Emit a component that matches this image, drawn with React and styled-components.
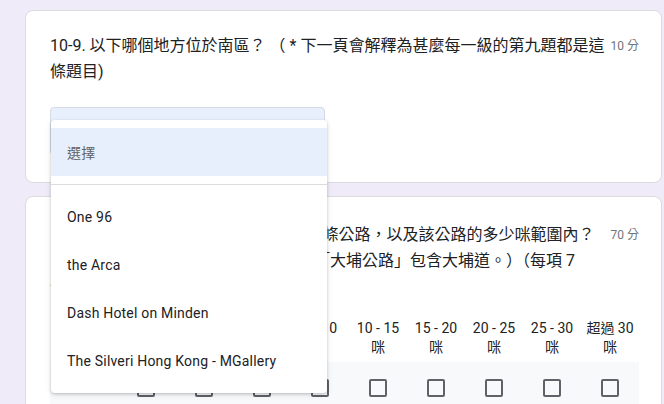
import React from 'react'
import styled, { createGlobalStyle } from 'styled-components'

const GlobalStyle = createGlobalStyle`
  html, body {
    margin: 0;
    padding: 0;
    background: #f0ebf8;
    overflow: hidden;
  }
  body {
    font-family: Roboto, "Noto Sans CJK TC", "Noto Sans", sans-serif;
    color: #202124;
  }
`

const Page = styled.div`
  width: 664px;
  height: 404px;
  padding: 10px 0 0 25px;
  box-sizing: border-box;
  overflow: hidden;
`

const Card = styled.div`
  width: 637px;
  box-sizing: border-box;
  background: #fff;
  border: 1px solid #dadce0;
  border-radius: 8px;
  padding: ${p => p.$top || 22}px 22px ${p => p.$bottom || 24}px 24px;
  margin-bottom: 13px;
`

const TitleRow = styled.div`
  display: flex;
  align-items: flex-start;
`

const Title = styled.div`
  flex: 1;
  font-size: 16px;
  line-height: 26px;
`

const Points = styled.div`
  flex: none;
  margin-left: 4px;
  font-size: 12px;
  line-height: 26px;
  color: #70757a;
`

const DropdownWrap = styled.div`
  position: relative;
  margin-top: 22px;
  width: 275px;
`

const Trigger = styled.div`
  height: 48px;
  box-sizing: border-box;
  background: #e8f0fe;
  border: 1px solid #d4d9e3;
  border-radius: 4px;
`

const Menu = styled.div`
  position: absolute;
  top: 13px;
  left: 1px;
  width: 276px;
  background: #fff;
  border-radius: 4px;
  box-shadow: 0 1px 3px rgba(0, 0, 0, 0.18), 0 2px 6px rgba(0, 0, 0, 0.1);
  z-index: 5;
`

const MenuGroup = styled.div`
  padding: 8px 0;
  & + & {
    border-top: 1px solid #dadce0;
  }
`

const MenuItem = styled.div`
  height: 48px;
  display: flex;
  align-items: center;
  padding: 0 16px;
  font-size: 14px;
  letter-spacing: 0.2px;
  color: ${p => (p.$placeholder ? '#5f6368' : '#202124')};
  background: ${p => (p.$active ? '#e8effc' : 'transparent')};
`

const Grid = styled.div`
  margin-top: 19px;
  display: grid;
  grid-template-columns: 67px repeat(9, 58px);
`

const HeadCell = styled.div`
  font-size: 14px;
  line-height: 19px;
  text-align: center;
  padding-bottom: 5px;
`

const Range = styled.div`
  white-space: nowrap;
`

const Row = styled.div`
  grid-column: 1 / -1;
  display: grid;
  grid-template-columns: 67px repeat(9, 58px);
  height: 52px;
  align-items: center;
  background: #f8f9fa;
`

const RowLabel = styled.div`
  font-size: 14px;
  padding-left: 12px;
`

const Box = styled.div`
  justify-self: center;
  width: 18px;
  height: 18px;
  box-sizing: border-box;
  border: 2px solid #5f6368;
  border-radius: 2px;
`

const options = ['One 96', 'the Arca', 'Dash Hotel on Minden', 'The Silveri Hong Kong - MGallery']
const ranges = ['少於 1', '1 - 3', '3 - 5', '5 - 10', '10 - 15', '15 - 20', '20 - 25', '25 - 30', '超過 30']

export default function App() {
  return (
    <Page>
      <GlobalStyle />
      <Card $bottom={27}>
        <TitleRow>
          <Title>10-9. 以下哪個地方位於南區？ （ * 下一頁會解釋為甚麼每一級的第九題都是這條題目)</Title>
          <Points>10 分</Points>
        </TitleRow>
        <DropdownWrap>
          <Trigger />
          <Menu>
            <MenuGroup>
              <MenuItem $placeholder $active>選擇</MenuItem>
            </MenuGroup>
            <MenuGroup>
              {options.map(o => (
                <MenuItem key={o}>{o}</MenuItem>
              ))}
            </MenuGroup>
          </Menu>
        </DropdownWrap>
      </Card>
      <Card $top={25}>
        <TitleRow>
          <Title>
            10-10. 以下各間酒店分別位於香港哪一條公路，以及該公路的多少咪範圍內？（距離以酒店正門至該公路直線計算；「大埔公路」包含大埔道。）（每項 7 分，共 70 分）
          </Title>
          <Points>70 分</Points>
        </TitleRow>
        <Grid>
          <div />
          {ranges.map(r => (
            <HeadCell key={r}>
              <Range>{r}</Range>咪
            </HeadCell>
          ))}
          <Row>
            <RowLabel>One 96</RowLabel>
            {ranges.map(r => (
              <Box key={r} />
            ))}
          </Row>
        </Grid>
      </Card>
    </Page>
  )
}
